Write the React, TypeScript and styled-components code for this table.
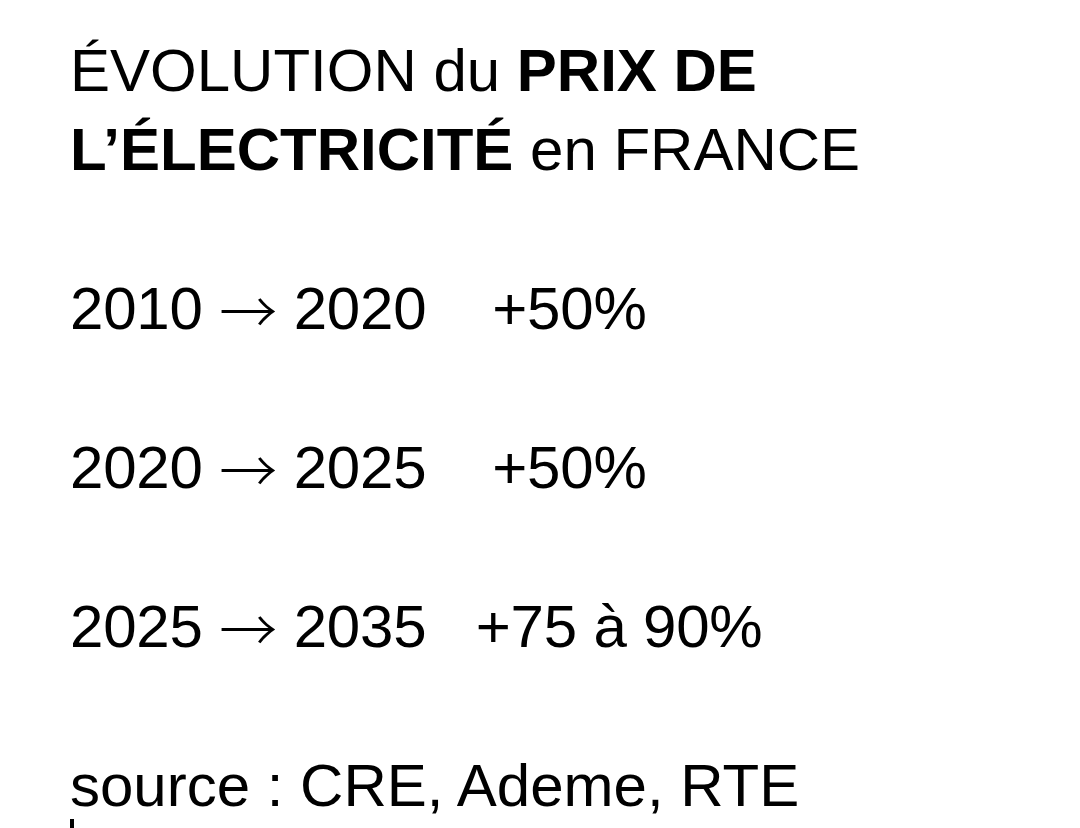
import React from "react";
import styled, { createGlobalStyle } from "styled-components";

const GlobalStyle = createGlobalStyle`
  html, body {
    margin: 0;
    padding: 0;
    background: #ffffff;
  }
  body {
    font-family: "Liberation Sans", Arial, sans-serif;
    color: #000000;
  }
`;

const Page = styled.main`
  width: 1080px;
  height: 828px;
  overflow: hidden;
  box-sizing: border-box;
  padding: 31px 0 0 70px;
  display: flex;
  flex-direction: column;
  font-size: 60px;
  line-height: 79px;
`;

const Title = styled.h1`
  margin: 0 0 80px;
  font-size: inherit;
  font-weight: 400;
  line-height: inherit;
`;

const Strong = styled.b`
  font-weight: 700;
`;

const Row = styled.p`
  margin: 0 0 79px;
  white-space: pre;
  letter-spacing: -0.2px;
`;

// long thin arrow, as in the original typeface
const Arrow = styled.span`
  font-family: "Noto Sans CJK JP", "Liberation Sans", sans-serif;
  font-weight: 300;
  font-size: 58px;
  letter-spacing: 0;
  vertical-align: -5px;
`;

const Source = styled.p`
  margin: 0;
`;

const Caret = styled.span`
  display: block;
  width: 4px;
  height: 14px;
  margin-top: -6px;
  background: #000;
`;

type rowType = { from: string; to: string; gap: string; value: string };

const rows: rowType[] = [
  { from: "2010", to: "2020", gap: "    ", value: "+50%" },
  { from: "2020", to: "2025", gap: "    ", value: "+50%" },
  { from: "2025", to: "2035", gap: "   ", value: "+75 à 90%" },
];

const App = () => {
  return (
    <>
      <GlobalStyle />
      <Page>
        <Title>
          ÉVOLUTION du <Strong>PRIX DE</Strong>
          <br />
          <Strong>L’ÉLECTRICITÉ</Strong> en FRANCE
        </Title>
        {rows.map((row, index) => (
          <Row key={`row${index}`}>
            {`${row.from} `}
            <Arrow>→</Arrow>
            {` ${row.to}${row.gap}${row.value}`}
          </Row>
        ))}
        <Source>source : CRE, Ademe, RTE</Source>
        <Caret />
      </Page>
    </>
  );
};

export default App;
